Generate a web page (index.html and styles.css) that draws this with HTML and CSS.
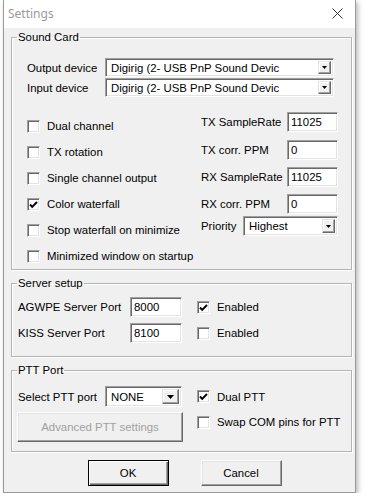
FILE: index.html
```html
<!DOCTYPE html>
<html lang="en">
<head>
    <meta charset="UTF-8">
    <title>Settings</title>
    <link rel="stylesheet" href="styles.css">
</head>
<body>
    <div class="window">
        <div class="titlebar">
            <span class="title">Settings</span>
            <svg class="close" width="11" height="11" viewBox="0 0 11 11">
                <path d="M0.5 0.5 L10.5 10.5 M10.5 0.5 L0.5 10.5" stroke="#333" stroke-width="1" fill="none"/>
            </svg>
        </div>

        <div class="client">
            <fieldset class="group">
                <legend>Sound Card</legend>
                <div class="sound-body">
                    <div class="device-row">
                        <span class="device-label">Output device</span>
                        <div class="combo device-combo">
                            <span class="combo-text">Digirig (2- USB PnP Sound Devic</span>
                            <span class="drop"><svg width="5" height="3" viewBox="0 0 5 3"><polygon points="0,0 5,0 2.5,3" fill="#000"/></svg></span>
                        </div>
                    </div>
                    <div class="device-row">
                        <span class="device-label">Input device</span>
                        <div class="combo device-combo">
                            <span class="combo-text">Digirig (2- USB PnP Sound Devic</span>
                            <span class="drop"><svg width="5" height="3" viewBox="0 0 5 3"><polygon points="0,0 5,0 2.5,3" fill="#000"/></svg></span>
                        </div>
                    </div>

                    <div class="sound-cols">
                        <div class="checks">
                            <div class="check-row"><span class="box"></span>Dual channel</div>
                            <div class="check-row"><span class="box"></span>TX rotation</div>
                            <div class="check-row"><span class="box"></span>Single channel output</div>
                            <div class="check-row"><span class="box"><svg width="11" height="11" viewBox="0 0 11 11"><path d="M2 5.5 L4.2 7.8 L9 3" stroke="#000" stroke-width="1.9" fill="none"/></svg></span>Color waterfall</div>
                            <div class="check-row"><span class="box"></span>Stop waterfall on minimize</div>
                            <div class="check-row"><span class="box"></span>Minimized window on startup</div>
                        </div>
                        <div class="rates">
                            <div class="rate-row"><span class="rate-label">TX SampleRate</span><span class="edit rate-edit">11025</span></div>
                            <div class="rate-row"><span class="rate-label">TX corr. PPM</span><span class="edit rate-edit">0</span></div>
                            <div class="rate-row"><span class="rate-label">RX SampleRate</span><span class="edit rate-edit">11025</span></div>
                            <div class="rate-row"><span class="rate-label">RX corr. PPM</span><span class="edit rate-edit">0</span></div>
                            <div class="rate-row">
                                <span class="priority-label">Priority</span>
                                <div class="combo priority-combo">
                                    <span class="combo-text">Highest</span>
                                    <span class="drop"><svg width="5" height="3" viewBox="0 0 5 3"><polygon points="0,0 5,0 2.5,3" fill="#000"/></svg></span>
                                </div>
                            </div>
                        </div>
                    </div>
                </div>
            </fieldset>

            <fieldset class="group server">
                <legend>Server setup</legend>
                <div class="server-body">
                    <div class="server-row">
                        <span class="server-label">AGWPE Server Port</span>
                        <span class="edit port-edit">8000</span>
                        <div class="check-row small"><span class="box"><svg width="11" height="11" viewBox="0 0 11 11"><path d="M2 5.5 L4.2 7.8 L9 3" stroke="#000" stroke-width="1.9" fill="none"/></svg></span>Enabled</div>
                    </div>
                    <div class="server-row">
                        <span class="server-label">KISS Server Port</span>
                        <span class="edit port-edit">8100</span>
                        <div class="check-row small"><span class="box"></span>Enabled</div>
                    </div>
                </div>
            </fieldset>

            <fieldset class="group ptt">
                <legend>PTT Port</legend>
                <div class="ptt-body">
                    <div class="ptt-select">
                        <span class="ptt-label">Select PTT port</span>
                        <div class="combo ptt-combo">
                            <span class="combo-text">NONE</span>
                            <span class="drop big"><svg width="7" height="4" viewBox="0 0 7 4"><polygon points="0,0 7,0 3.5,4" fill="#000"/></svg></span>
                        </div>
                    </div>
                    <div class="check-row small"><span class="box"><svg width="11" height="11" viewBox="0 0 11 11"><path d="M2 5.5 L4.2 7.8 L9 3" stroke="#000" stroke-width="1.9" fill="none"/></svg></span>Dual PTT</div>
                    <button class="btn advanced" disabled>Advanced PTT settings</button>
                    <div class="check-row small swap"><span class="box"></span>Swap COM pins for PTT</div>
                </div>
            </fieldset>

            <div class="actions">
                <button class="btn default">OK</button>
                <button class="btn">Cancel</button>
            </div>
        </div>
    </div>
</body>
</html>
```

FILE: styles.css
```css
* {
    box-sizing: border-box;
}

body {
    margin: 0;
    background: #fff;
    font-family: "Liberation Sans", Arial, sans-serif;
    font-size: 11.4px;
    color: #000;
}

.window {
    width: 353px;
    height: 493px;
    margin-left: 3px;
    background: #f0f0f0;
    border: 1px solid #9a9a9a;
    border-top: none;
    box-shadow: 2px 2px 5px rgba(0, 0, 0, 0.28);
}

.titlebar {
    height: 28px;
    background: #fff;
    display: flex;
    align-items: center;
    justify-content: space-between;
    padding: 0 12px 0 4px;
}

.title {
    font-family: "Noto Sans", sans-serif;
    font-size: 12px;
    color: #9a9a9a;
    margin-top: -1px;
}

.close {
    margin-top: -1px;
}

.client {
    padding: 2px 0 0 7px;
}

/* group boxes */
.group {
    width: 341px;
    margin: 0;
    padding: 0;
    border: 1px solid #b4b4b4;
    box-shadow: inset 1px 1px 0 #fff, 1px 1px 0 #fff;
    min-width: 0;
}

.group legend {
    margin-left: 5px;
    padding: 0 1px;
    line-height: 14px;
}

.server,
.ptt {
    margin-top: 6px;
}

/* classic 3d edges */
.edit,
.combo {
    display: flex;
    align-items: center;
    background: #fff;
    border: 1px solid;
    border-color: #a0a0a0 #fff #fff #a0a0a0;
    box-shadow: inset 1px 1px 0 #696969, inset -1px -1px 0 #e3e3e3;
    padding: 0 2px 0 3px;
    white-space: nowrap;
    overflow: hidden;
}

.combo {
    padding: 2px;
}

.combo-text {
    flex: 1;
    padding-left: 3px;
    overflow: hidden;
}

.drop {
    width: 13px;
    height: 100%;
    display: flex;
    align-items: center;
    justify-content: center;
    background: #f0f0f0;
    border: 1px solid;
    border-color: #e3e3e3 #696969 #696969 #e3e3e3;
    box-shadow: inset -1px -1px 0 #a0a0a0, inset 1px 1px 0 #fff;
}

.drop.big {
    width: 17px;
}

.box {
    width: 13px;
    height: 13px;
    flex: none;
    display: flex;
    align-items: center;
    justify-content: center;
    background: #fff;
    border: 1px solid;
    border-color: #a0a0a0 #fff #fff #a0a0a0;
    box-shadow: inset 1px 1px 0 #696969, inset -1px -1px 0 #e3e3e3;
}

.check-row {
    display: flex;
    align-items: center;
    gap: 7px;
    height: 26px;
}

.check-row.small {
    height: 20px;
}

/* sound card */
.sound-body {
    padding: 14px 0 0 15px;
}

.device-row {
    display: flex;
    align-items: center;
    height: 19px;
    margin-bottom: 1px;
}

.device-label {
    width: 78px;
}

.device-combo {
    width: 229px;
    height: 19px;
}

.sound-cols {
    display: flex;
    margin-top: 16px;
}

.checks {
    width: 174px;
    display: flex;
    flex-direction: column;
}

.rates {
    display: grid;
    grid-template-rows: 28px 27px 27px 22px 20px;
    margin-top: -1px;
}

.rate-row {
    display: flex;
    align-items: flex-start;
}

.rate-label {
    width: 86px;
    line-height: 20px;
}

.rate-edit {
    width: 51px;
    height: 20px;
}

.priority-label {
    width: 42px;
    line-height: 20px;
}

.priority-combo {
    width: 95px;
    height: 20px;
}

/* server setup */
.server-body {
    padding: 7px 0 13px 6px;
    display: flex;
    flex-direction: column;
    gap: 6px;
}

.server-row {
    display: flex;
    align-items: center;
}

.server-label {
    width: 112px;
}

.port-edit {
    width: 52px;
    height: 20px;
    margin-right: 15px;
}

/* ptt port */
.ptt-body {
    padding: 9px 0 9px 5px;
    display: grid;
    grid-template-columns: 166px auto;
    column-gap: 14px;
    row-gap: 5px;
    align-items: center;
}

.ptt-select {
    display: flex;
    align-items: center;
}

.ptt-label {
    width: 88px;
    padding-left: 1px;
}

.ptt-combo {
    width: 77px;
    height: 21px;
}

.swap {
    align-self: start;
}

/* buttons */
.btn {
    font: inherit;
    color: #000;
    background: #f0f0f0;
    border: 1px solid;
    border-color: #fff #696969 #696969 #fff;
    box-shadow: inset -1px -1px 0 #a0a0a0, inset 1px 1px 0 #e3e3e3;
    padding: 0;
    width: 81px;
    height: 26px;
}

.btn.default {
    border: 1px solid #000;
    box-shadow: inset 1px 1px 0 #fff, inset -1px -1px 0 #696969, inset -2px -2px 0 #a0a0a0;
}

.btn.advanced {
    width: 166px;
    height: 30px;
    color: #a0a0a0;
}

.actions {
    display: flex;
    justify-content: center;
    gap: 32px;
    margin-top: 8px;
    padding-left: 3px;
}
```
